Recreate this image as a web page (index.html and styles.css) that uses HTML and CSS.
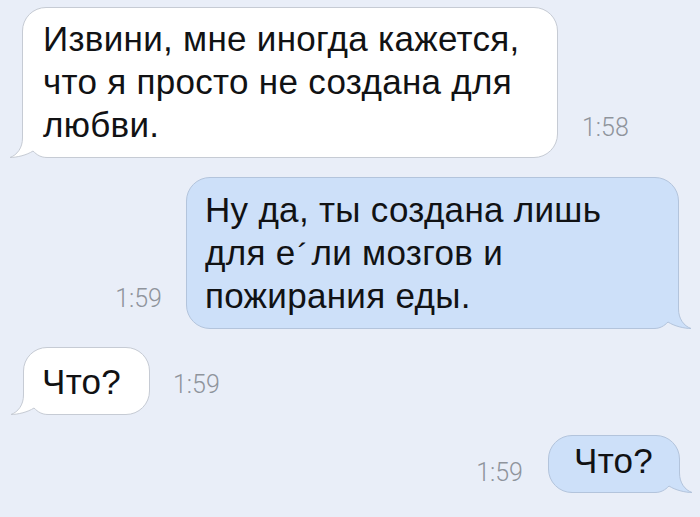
FILE: index.html
```html
<!DOCTYPE html>
<html lang="ru">
<head>
<meta charset="utf-8">
<title>Сообщения</title>
<link rel="stylesheet" href="styles.css">
</head>
<body>
<main class="thread">
  <div class="row row-in row-1">
    <div class="bubble bubble-in w-1">
      <svg class="tail" width="46" height="34" viewBox="0 0 46 34" aria-hidden="true">
        <rect class="tail-bg" x="0" y="0" width="46" height="34"/>
        <path class="tail-fill" d="M15.5,0 L15.5,12 C15.5,22 10,29 3,31.5 C10,31.5 20,29 26,25 C30,29 34,31.5 40,31.5 L46,31.5 L46,0 Z"/>
        <path class="tail-line" d="M15.5,0 L15.5,12 C15.5,22 10,29 3,31.5 C10,31.5 20,29 26,25 C30,29 34,31.5 40,31.5 L46,31.5"/>
      </svg>
      <p class="text">Извини, мне иногда кажется,<br>что я просто не создана для<br>любви.</p>
    </div>
    <span class="time">1:58</span>
  </div>

  <div class="row row-out row-2">
    <span class="time">1:59</span>
    <div class="bubble bubble-out w-2">
      <svg class="tail" width="46" height="34" viewBox="0 0 46 34" aria-hidden="true">
        <rect class="tail-bg" x="0" y="0" width="46" height="34"/>
        <path class="tail-fill" d="M15.5,0 L15.5,12 C15.5,22 10,29 3,31.5 C10,31.5 20,29 26,25 C30,29 34,31.5 40,31.5 L46,31.5 L46,0 Z"/>
        <path class="tail-line" d="M15.5,0 L15.5,12 C15.5,22 10,29 3,31.5 C10,31.5 20,29 26,25 C30,29 34,31.5 40,31.5 L46,31.5"/>
      </svg>
      <p class="text">Ну да, ты создана лишь<br>для е<span class="accent">´</span>ли мозгов и<br>пожирания еды.</p>
    </div>
  </div>

  <div class="row row-in row-3">
    <div class="bubble bubble-in w-3">
      <svg class="tail" width="46" height="34" viewBox="0 0 46 34" aria-hidden="true">
        <rect class="tail-bg" x="0" y="0" width="46" height="34"/>
        <path class="tail-fill" d="M15.5,0 L15.5,12 C15.5,22 10,29 3,31.5 C10,31.5 20,29 26,25 C30,29 34,31.5 40,31.5 L46,31.5 L46,0 Z"/>
        <path class="tail-line" d="M15.5,0 L15.5,12 C15.5,22 10,29 3,31.5 C10,31.5 20,29 26,25 C30,29 34,31.5 40,31.5 L46,31.5"/>
      </svg>
      <p class="text">Что?</p>
    </div>
    <span class="time">1:59</span>
  </div>

  <div class="row row-out row-4">
    <span class="time time-low">1:59</span>
    <div class="bubble bubble-out w-4">
      <svg class="tail" width="46" height="34" viewBox="0 0 46 34" aria-hidden="true">
        <rect class="tail-bg" x="0" y="0" width="46" height="34"/>
        <path class="tail-fill" d="M15.5,0 L15.5,12 C15.5,22 10,29 3,31.5 C10,31.5 20,29 26,25 C30,29 34,31.5 40,31.5 L46,31.5 L46,0 Z"/>
        <path class="tail-line" d="M15.5,0 L15.5,12 C15.5,22 10,29 3,31.5 C10,31.5 20,29 26,25 C30,29 34,31.5 40,31.5 L46,31.5"/>
      </svg>
      <p class="text">Что?</p>
    </div>
  </div>
</main>
</body>
</html>
```

FILE: styles.css
```css
:root {
  --page-bg: #e9eef8;
  --in-fill: #ffffff;
  --in-line: #c6cbd4;
  --out-fill: #cde0f9;
  --out-line: #b3c4dc;
  --ink: #111214;
  --stamp: #8f949c;
}

* {
  box-sizing: border-box;
}

html,
body {
  margin: 0;
  height: 100%;
  background: var(--page-bg);
}

body {
  font-family: "Liberation Sans", Arial, sans-serif;
  color: var(--ink);
  overflow: hidden;
}

.thread {
  display: flex;
  flex-direction: column;
  padding-top: 7px;
}

.row {
  display: flex;
  align-items: flex-end;
}

.row-in {
  justify-content: flex-start;
  padding-left: 22px;
}

.row-out {
  justify-content: flex-end;
  padding-right: 21px;
}

.row-2 { margin-top: 19px; }
.row-3 { margin-top: 18px; padding-left: 23px; }
.row-4 { margin-top: 20px; padding-right: 20px; }

/* message bubble */
.bubble {
  position: relative;
  border: 1px solid;
  border-radius: 24px;
  padding: 9px 14px 9px 20px;
}

.bubble-in {
  background: var(--in-fill);
  border-color: var(--in-line);
  border-bottom-left-radius: 0;
}

.bubble-out {
  background: var(--out-fill);
  border-color: var(--out-line);
  border-bottom-right-radius: 0;
}

.w-1 { width: 536px; height: 151px; }
.w-2 { width: 493px; height: 152px; padding-left: 18px; padding-top: 10px; }
.w-3 { width: 127px; height: 68px; padding-left: 18px; padding-top: 13px; }
.w-4 { width: 132px; height: 58px; padding-left: 25px; padding-top: 4px; }

.text {
  position: relative;
  margin: 0;
  font-size: 35px;
  line-height: 43px;
  letter-spacing: 0.3px;
  white-space: nowrap;
}

.w-3 .text,
.w-4 .text {
  line-height: 42px;
}

/* the stray stress mark sits lower than a normal acute */
.accent {
  display: inline-block;
  font-size: 32px;
  line-height: 1;
  margin: 0 3px 0 2px;
  transform: translateY(1px);
}

/* the hooked corner of a bubble */
.tail {
  position: absolute;
  bottom: -3px;
  display: block;
  overflow: visible;
}

.bubble-in .tail {
  left: -16px;
}

.bubble-out .tail {
  right: -16px;
  transform: scaleX(-1);
}

.tail-bg {
  fill: var(--page-bg);
}

.tail-line {
  fill: none;
  stroke-width: 1;
}

.bubble-in .tail-fill { fill: var(--in-fill); }
.bubble-in .tail-line { stroke: var(--in-line); }
.bubble-out .tail-fill { fill: var(--out-fill); }
.bubble-out .tail-line { stroke: var(--out-line); }

/* delivery time */
.time {
  font-family: Roboto, "Liberation Sans", sans-serif;
  font-weight: 300;
  font-size: 25px;
  line-height: 24px;
  color: var(--stamp);
  margin-bottom: 18px;
}

.row-in .time { margin-left: 24px; }
.row-3 .time { margin-left: 23px; }
.row-out .time { margin-right: 24px; }
.row-4 .time { margin-right: 25px; }

.time-low {
  margin-bottom: 8px;
}
```
